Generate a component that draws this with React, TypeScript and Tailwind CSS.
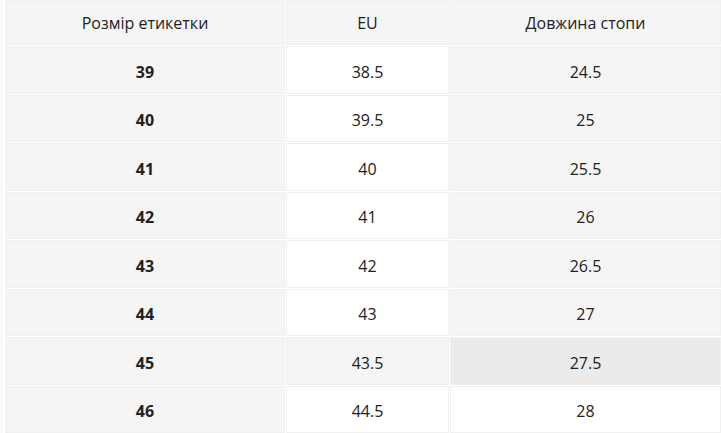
const rows = [
  { label: "39", eu: "38.5", foot: "24.5" },
  { label: "40", eu: "39.5", foot: "25" },
  { label: "41", eu: "40", foot: "25.5" },
  { label: "42", eu: "41", foot: "26" },
  { label: "43", eu: "42", foot: "26.5" },
  { label: "44", eu: "43", foot: "27" },
  { label: "45", eu: "43.5", foot: "27.5" },
  { label: "46", eu: "44.5", foot: "28" },
];

const cell = "flex items-center justify-center border border-[#f0f0f0]";

export default function App() {
  return (
    <div
      className="h-[433px] w-[721px] overflow-hidden bg-white text-[16px] text-[#222]"
      style={{ fontFamily: '"Open Sans", "Noto Sans", sans-serif' }}
    >
      <div className="ml-px border-l border-[#f0f0f0] pl-[3px]">
        <div className="grid grid-cols-[280px_163px_1fr] gap-px">
          <div className={`${cell} h-[45px] bg-[#f5f5f5]`}>Розмір етикетки</div>
          <div className={`${cell} h-[45px] bg-[#f5f5f5]`}>EU</div>
          <div className={`${cell} h-[45px] bg-[#f5f5f5]`}>Довжина стопи</div>
          {rows.map((r, i) => {
            const hovered = i === 6;
            const last = i === rows.length - 1;
            return (
              <div key={r.label} className="contents">
                <div className={`${cell} h-[47.5px] pt-[4px] bg-[#f5f5f5] font-bold`}>{r.label}</div>
                <div className={`${cell} h-[47.5px] pt-[4px] ${hovered ? "bg-[#f5f5f5]" : "bg-white"}`}>
                  {r.eu}
                </div>
                <div
                  className={`${cell} h-[47.5px] pt-[4px] ${
                    hovered ? "bg-[#ebebeb]" : last ? "bg-white" : "bg-[#f5f5f5]"
                  }`}
                >
                  {r.foot}
                </div>
              </div>
            );
          })}
        </div>
      </div>
    </div>
  );
}
